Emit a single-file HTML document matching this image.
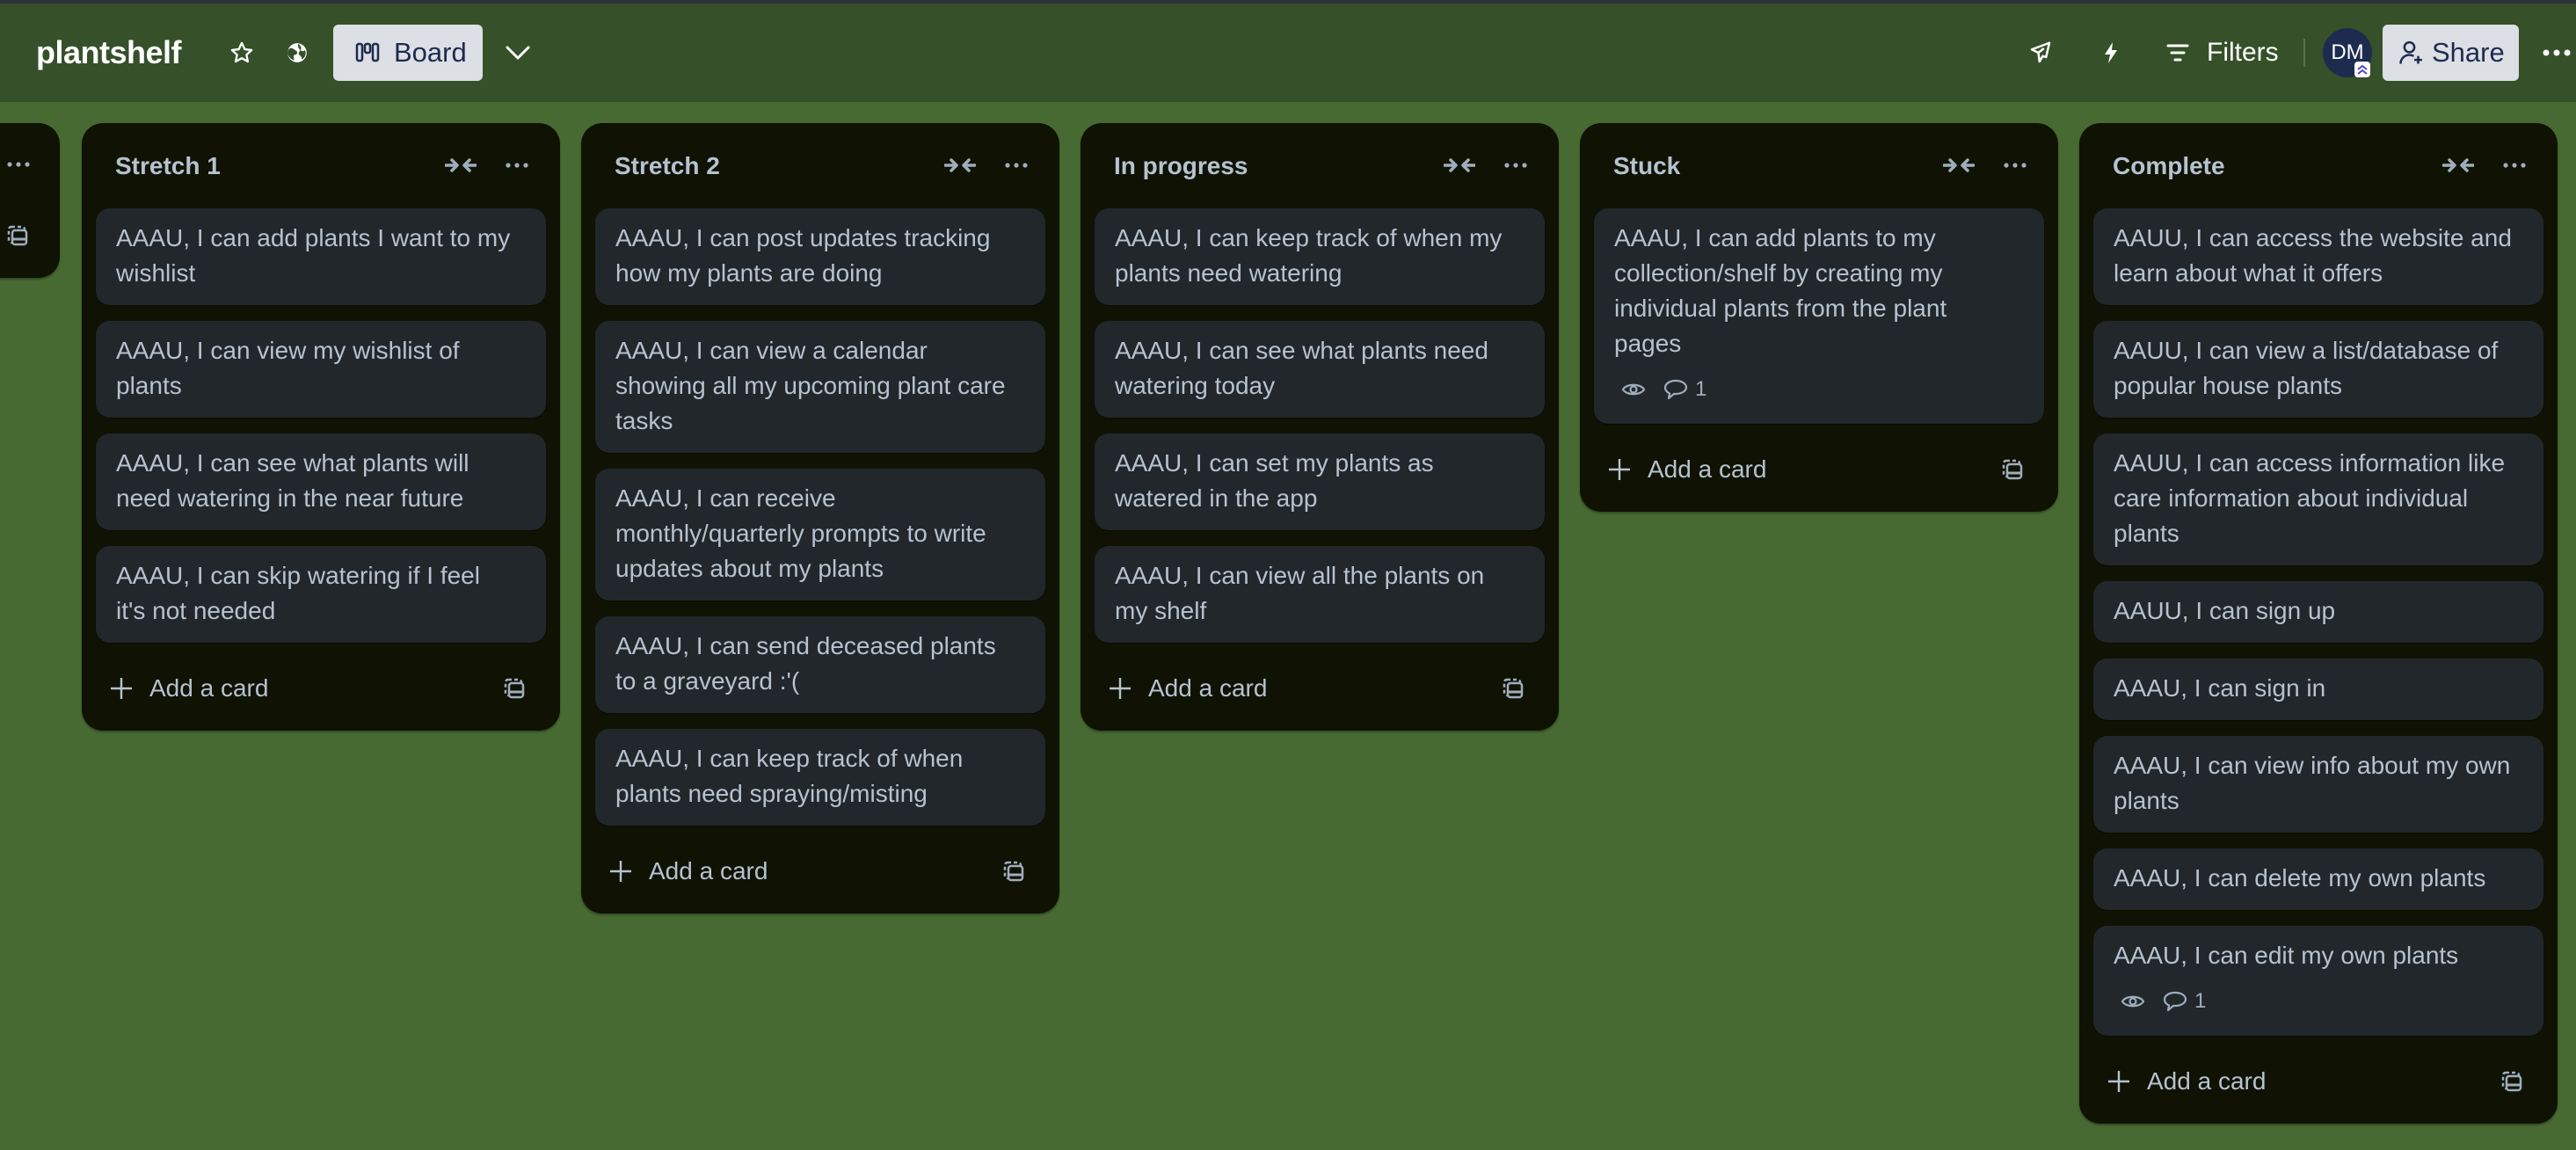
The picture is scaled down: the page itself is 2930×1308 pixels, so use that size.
<!DOCTYPE html>
<html><head><meta charset="utf-8"><style>
*{box-sizing:border-box;margin:0;padding:0}
body{width:2930px;height:1308px;overflow:hidden;background:#476a32;font-family:"Liberation Sans",sans-serif;position:relative}
.top{position:absolute;left:0;top:0;width:2930px;height:4px;background:#2c333a}
.hdr{position:absolute;left:0;top:4px;width:2930px;height:112px;background:#36502a}
.abs{position:absolute}
.title{left:41px;top:39px;font-size:36px;font-weight:bold;color:#fff;letter-spacing:-0.5px}
.btn{background:#dcdfe4;border-radius:6px;color:#1d2b4f;font-size:30px}
.list{position:absolute;top:140px;width:544px;background:#101204;border-radius:24px;box-shadow:0 2px 2px rgba(0,0,0,.3)}
.lh{height:97px;position:relative}
.lt{position:absolute;left:38px;top:29px;font-size:28px;line-height:40px;font-weight:bold;color:#b6c2cf}
.card{margin:0 16px 18px 16px;background:#22272b;border-radius:16px;padding:14px 23px 16px 23px;font-size:28px;line-height:40px;color:#b6c2cf;white-space:nowrap;box-shadow:0 1px 1px rgba(0,0,0,.4)}
.card:last-of-type{margin-bottom:0}
.badges{height:40px;margin-top:12px;display:flex;align-items:center;gap:20px;color:#9fadbc;font-size:24px;padding-left:8px;margin-bottom:3px}
.add{height:64px;margin:20px 16px 16px 16px;position:relative;color:#b6c2cf;font-size:28px}
.add .pl{position:absolute;left:16px;top:19px}
.add .tx{position:absolute;left:61px;top:16px;line-height:32px}
.add .tp{position:absolute;right:24px;top:20px}
</style></head><body>
<div class="top"></div>
<div class="hdr"></div>
<div class="abs title">plantshelf</div>
<svg class="abs" style="left:261px;top:46px" width="28" height="28" viewBox="0 0 24 24"><path d="M12 2.5l2.9 6.1 6.6.8-4.9 4.6 1.3 6.6L12 17.3 6.1 20.6l1.3-6.6L2.5 9.4l6.6-.8z" fill="none" stroke="#fff" stroke-width="2" stroke-linejoin="round"/></svg>
<svg class="abs" style="left:325px;top:47px" width="26" height="26" viewBox="0 0 24 24"><circle cx="12" cy="12" r="10" fill="#fff"/><path d="M5 7c3 0 4 2 6 3s1 4-1 4-2 3-1 6c-4-1-7-5-7-8 0-2 1-4 3-5zM14 3c1 2 3 3 2 5s2 3 3 2 2 0 2 2c0 3-2 6-4 7 0-3-2-4-3-5s0-3 1-4-3-3-2-7z" fill="#36502a"/></svg>
<div class="abs btn" style="left:379px;top:28px;width:170px;height:64px"></div>
<svg class="abs" style="left:404px;top:48px" width="28" height="24" viewBox="0 0 28 24"><rect x="2" y="2" width="6" height="19" rx="2" fill="none" stroke="#1d2b4f" stroke-width="2.5"/><rect x="11" y="2" width="6" height="10" rx="2" fill="none" stroke="#1d2b4f" stroke-width="2.5"/><rect x="20" y="2" width="6" height="19" rx="2" fill="none" stroke="#1d2b4f" stroke-width="2.5"/></svg>
<div class="abs" style="left:448px;top:42px;font-size:31px;color:#1d2b4f;line-height:36px">Board</div>
<svg class="abs" style="left:574px;top:48px" width="30" height="24" viewBox="0 0 30 24"><path d="M3 6l12 12 12-12" fill="none" stroke="#fff" stroke-width="3" stroke-linecap="round" stroke-linejoin="round"/></svg>

<svg class="abs" style="left:2306px;top:45px" width="30" height="30" viewBox="0 0 24 24"><path d="M20 3L4 9l6 3 1 8 3-5 3 1zM10 12l5-4" fill="none" stroke="#fff" stroke-width="2" stroke-linejoin="round"/></svg>
<svg class="abs" style="left:2390px;top:47px" width="22" height="26" viewBox="0 0 22 26"><path d="M13 1L4 15h6l-2 10 10-15h-6z" fill="#fff"/></svg>
<svg class="abs" style="left:2464px;top:48px" width="26" height="24" viewBox="0 0 26 24"><path d="M2 4h22M6 12h14M10 20h6" stroke="#fff" stroke-width="3" stroke-linecap="round"/></svg>
<div class="abs" style="left:2510px;top:42px;font-size:30px;color:#fff;line-height:36px">Filters</div>
<div class="abs" style="left:2620px;top:44px;width:2px;height:32px;background:#5a6e4e"></div>
<div class="abs" style="left:2642px;top:32px;width:56px;height:56px;border-radius:50%;background:#1d2b4f;color:#fff;font-size:24px;line-height:56px;text-align:center">DM</div>
<svg class="abs" style="left:2678px;top:70px" width="18" height="18" viewBox="0 0 18 18"><rect width="18" height="18" rx="4" fill="#fff"/><path d="M4 9l5-4 5 4M4 14l5-4 5 4" fill="none" stroke="#4f46c7" stroke-width="2"/></svg>
<div class="abs btn" style="left:2710px;top:28px;width:155px;height:64px"></div>
<svg class="abs" style="left:2728px;top:45px" width="30" height="30" viewBox="0 0 24 24"><circle cx="10" cy="7" r="4.5" fill="none" stroke="#1d2b4f" stroke-width="2"/><path d="M2 22c0-5 4-8 8-8 2 0 3 .5 4 1M18 15v7M14.5 18.5h7" fill="none" stroke="#1d2b4f" stroke-width="2"/></svg>
<div class="abs" style="left:2766px;top:42px;font-size:31px;color:#1d2b4f;line-height:36px">Share</div>
<svg class="abs" style="left:2890px;top:54px" width="36" height="12" viewBox="0 0 36 12"><circle cx="6" cy="6" r="3.5" fill="#fff"/><circle cx="18" cy="6" r="3.5" fill="#fff"/><circle cx="30" cy="6" r="3.5" fill="#fff"/></svg>

<div class="list" style="left:-480px;width:548px;height:176px"></div>
<svg class="abs" style="left:8px;top:182px" width="26" height="10" viewBox="0 0 26 10"><circle cx="3" cy="5" r="2.6" fill="#9fadbc"/><circle cx="13" cy="5" r="2.6" fill="#9fadbc"/><circle cx="23" cy="5" r="2.6" fill="#9fadbc"/></svg>
<svg class="abs" style="left:8px;top:256px" width="24" height="24" viewBox="0 0 24 24"><rect x="2" y="2" width="18" height="18" rx="3" fill="none" stroke="#9fadbc" stroke-width="2.5" stroke-dasharray="4 3"/><rect x="6" y="6" width="16" height="16" rx="3" fill="#101204" stroke="#9fadbc" stroke-width="2.5"/><path d="M6 16h16" stroke="#9fadbc" stroke-width="3"/></svg>

<div id="lists"></div>
<script>
const ic=`<svg width="36" height="20" viewBox="0 0 36 20" style="position:absolute;right:95px;top:38px"><path d="M1 10h12M8 4l6 6-6 6M35 10H23M28 4l-6 6 6 6" fill="none" stroke="#9fadbc" stroke-width="3.5" stroke-linecap="round" stroke-linejoin="round"/></svg><svg width="26" height="10" viewBox="0 0 26 10" style="position:absolute;right:36px;top:43px"><circle cx="3" cy="5" r="2.6" fill="#9fadbc"/><circle cx="13" cy="5" r="2.6" fill="#9fadbc"/><circle cx="23" cy="5" r="2.6" fill="#9fadbc"/></svg>`;
const tpl=`<svg class="tp" width="24" height="24" viewBox="0 0 24 24"><rect x="2" y="2" width="18" height="18" rx="3" fill="none" stroke="#9fadbc" stroke-width="2.5" stroke-dasharray="4 3"/><rect x="6" y="6" width="16" height="16" rx="3" fill="#101204" stroke="#9fadbc" stroke-width="2.5"/><path d="M6 16h16" stroke="#9fadbc" stroke-width="3"/></svg>`;
const badge=`<div class="badges"><svg width="28" height="20" viewBox="0 0 28 20"><path d="M2 10C6 3 22 3 26 10 22 17 6 17 2 10z" fill="none" stroke="#9fadbc" stroke-width="2.2"/><circle cx="14" cy="10" r="3.5" fill="none" stroke="#9fadbc" stroke-width="2.2"/></svg><span style="display:flex;align-items:center;gap:8px"><svg width="28" height="24" viewBox="0 0 28 24"><path d="M14 2C7 2 2 5.5 2 10c0 3 2 5 5 6.5L6 22l6-5h2c7 0 12-3.5 12-7.5S21 2 14 2z" fill="none" stroke="#9fadbc" stroke-width="2.2" stroke-linejoin="round"/></svg>1</span></div>`;
const L=[
["Stretch 1",93,["AAAU, I can add plants I want to my<br>wishlist","AAAU, I can view my wishlist of<br>plants","AAAU, I can see what plants will<br>need watering in the near future","AAAU, I can skip watering if I feel<br>it's not needed"]],
["Stretch 2",661,["AAAU, I can post updates tracking<br>how my plants are doing","AAAU, I can view a calendar<br>showing all my upcoming plant care<br>tasks","AAAU, I can receive<br>monthly/quarterly prompts to write<br>updates about my plants","AAAU, I can send deceased plants<br>to a graveyard :'(","AAAU, I can keep track of when<br>plants need spraying/misting"]],
["In progress",1229,["AAAU, I can keep track of when my<br>plants need watering","AAAU, I can see what plants need<br>watering today","AAAU, I can set my plants as<br>watered in the app","AAAU, I can view all the plants on<br>my shelf"]],
["Stuck",1797,["AAAU, I can add plants to my<br>collection/shelf by creating my<br>individual plants from the plant<br>pages|B"]],
["Complete",2365,["AAUU, I can access the website and<br>learn about what it offers","AAUU, I can view a list/database of<br>popular house plants","AAUU, I can access information like<br>care information about individual<br>plants","AAUU, I can sign up","AAAU, I can sign in","AAAU, I can view info about my own<br>plants","AAAU, I can delete my own plants","AAAU, I can edit my own plants|B"]]];
let h='';
for(const [t,x,cs] of L){
 h+=`<div class="list" style="left:${x}px"><div class="lh"><div class="lt">${t}</div>${ic}</div>`;
 for(const c of cs){const [tx,b]=c.split('|');h+=`<div class="card">${tx}${b?badge:''}</div>`;}
 h+=`<div class="add"><svg class="pl" width="26" height="26" viewBox="0 0 26 26"><path d="M13 1v24M1 13h24" stroke="#b6c2cf" stroke-width="2.4"/></svg><div class="tx">Add a card</div>${tpl}</div></div>`;
}
document.getElementById('lists').innerHTML=h;
</script>
</body></html>
